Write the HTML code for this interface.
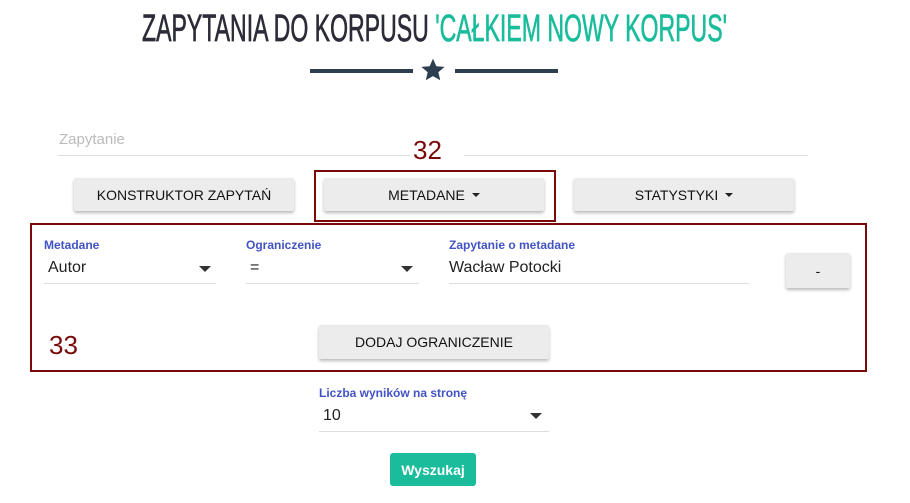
<!DOCTYPE html>
<html><head><meta charset="utf-8"><style>
*{margin:0;padding:0;box-sizing:border-box}
body{width:910px;height:503px;background:#fff;position:relative;overflow:hidden;font-family:"Liberation Sans",sans-serif;color:#222}
.a{position:absolute}
.title{left:142px;top:6px;width:585px;height:46px;white-space:nowrap;font-size:38px;color:#2c2c38;transform-origin:left top;line-height:46px;letter-spacing:0;-webkit-text-stroke:0.7px currentColor}
.btn{position:absolute;background:#ececec;border-radius:2px;box-shadow:0 2px 3px rgba(0,0,0,.28);font-size:14px;color:#111;display:flex;align-items:center;justify-content:center;text-transform:uppercase}
.caret{display:inline-block;width:0;height:0;border-left:4px solid transparent;border-right:4px solid transparent;border-top:4px solid #222;margin-left:7px}
.lab{font-size:12px;color:#4254c4;font-weight:bold}
.val{font-size:16px;color:#222}
.ul{height:1px;background:#ddd}
.dd{width:0;height:0;border-left:6px solid transparent;border-right:6px solid transparent;border-top:6px solid #333}
.red{border:2px solid #7a0a0a}
</style></head><body>
<div class="a title" id="t"><span>ZAPYTANIA DO KORPUSU </span><span style="color:#1abc9c">'CAŁKIEM NOWY KORPUS'</span></div>
<div class="a" style="left:310px;top:69px;width:103px;height:4px;background:#2c3e50"></div>
<svg class="a" style="left:420px;top:57px" width="26" height="26" viewBox="0 0 24 24"><path fill="#2c3e50" d="M12 1.5l3.1 7 7.6.6-5.8 5 1.8 7.4L12 17.6l-6.7 3.9 1.8-7.4-5.8-5 7.6-.6z"/></svg>
<div class="a" style="left:455px;top:69px;width:103px;height:4px;background:#2c3e50"></div>

<div class="a" style="left:59px;top:131px;font-size:15px;color:#bbb">Zapytanie</div>
<div class="a ul" style="left:58px;top:155px;width:352px"></div>
<div class="a ul" style="left:464px;top:155px;width:344px"></div>
<div class="a" style="left:413px;top:135px;font-size:26px;color:#7a0a0a">32</div>

<div class="btn" style="left:74px;top:178px;width:220px;height:33px">Konstruktor zapytań</div>
<div class="a red" style="left:314px;top:170px;width:242px;height:52px"></div>
<div class="btn" style="left:324px;top:178px;width:220px;height:33px">Metadane<span class="caret"></span></div>
<div class="btn" style="left:574px;top:178px;width:220px;height:33px">Statystyki<span class="caret"></span></div>

<div class="a red" style="left:30px;top:223px;width:837px;height:149px"></div>
<div class="a lab" style="left:44px;top:238px">Metadane</div>
<div class="a val" style="left:48px;top:259px">Autor</div>
<div class="a dd" style="left:199px;top:266px"></div>
<div class="a ul" style="left:44px;top:283px;width:172px"></div>
<div class="a lab" style="left:246px;top:238px">Ograniczenie</div>
<div class="a val" style="left:250px;top:259px">=</div>
<div class="a dd" style="left:401px;top:266px"></div>
<div class="a ul" style="left:246px;top:283px;width:173px"></div>
<div class="a lab" style="left:449px;top:238px">Zapytanie o metadane</div>
<div class="a val" style="left:449px;top:259px">Wacław Potocki</div>
<div class="a ul" style="left:449px;top:283px;width:300px"></div>
<div class="btn" style="left:786px;top:253px;width:64px;height:35px">-</div>
<div class="a" style="left:49px;top:330px;font-size:26px;color:#7a0a0a">33</div>
<div class="btn" style="left:319px;top:325px;width:230px;height:34px">Dodaj ograniczenie</div>

<div class="a lab" style="left:319px;top:386px">Liczba wyników na stronę</div>
<div class="a val" style="left:323px;top:407px">10</div>
<div class="a dd" style="left:530px;top:413px"></div>
<div class="a ul" style="left:319px;top:431px;width:230px"></div>
<div class="a" style="left:390px;top:453px;width:86px;height:33px;background:#1abc9c;border-radius:3px;color:#fff;font-weight:bold;font-size:14px;display:flex;align-items:center;justify-content:center">Wyszukaj</div>
<script>
var t=document.getElementById('t');t.style.width='auto';var sw=t.getBoundingClientRect().width;t.style.transform='scaleX('+(585/sw)+')';
</script>
</body></html>
